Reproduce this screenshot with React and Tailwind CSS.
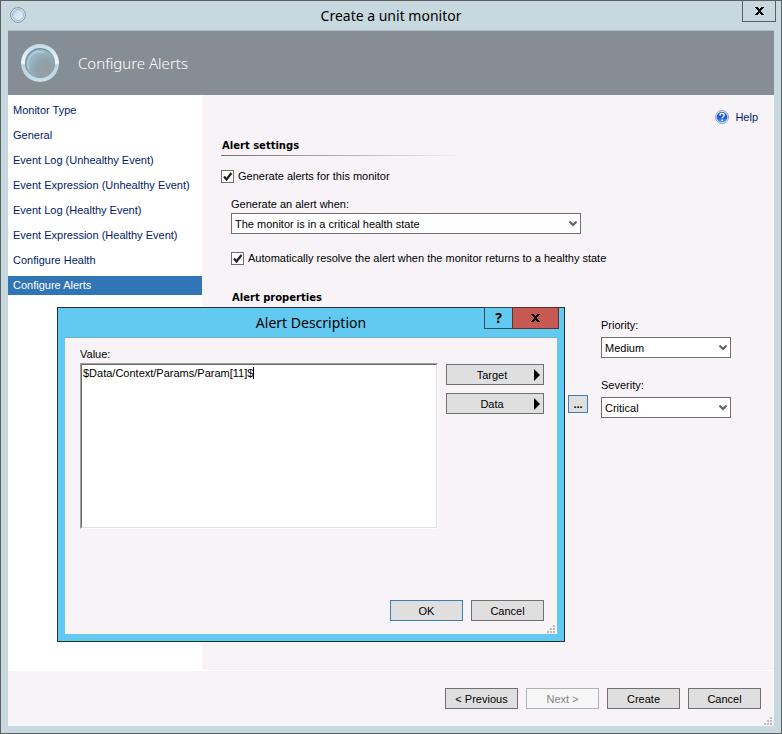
import { useState } from "react";

const steps = [
  "Monitor Type",
  "General",
  "Event Log (Unhealthy Event)",
  "Event Expression (Unhealthy Event)",
  "Event Log (Healthy Event)",
  "Event Expression (Healthy Event)",
  "Configure Health",
  "Configure Alerts",
];

const OrbIcon = ({ className }) => (
  <svg viewBox="0 0 40 40" className={className} aria-hidden="true">
    <defs>
      <linearGradient id="orb-ring" x1="0" y1="0" x2="0" y2="1">
        <stop offset="0" stopColor="#c3dbe7" />
        <stop offset="0.5" stopColor="#f1f7fb" />
        <stop offset="0.55" stopColor="#b9d2df" />
        <stop offset="1" stopColor="#c9dfe9" />
      </linearGradient>
      <radialGradient id="orb-glass" cx="0.68" cy="0.7" r="0.7">
        <stop offset="0" stopColor="#9a9a9f" />
        <stop offset="0.5" stopColor="#8fa3ad" />
        <stop offset="1" stopColor="#9dbccb" />
      </radialGradient>
    </defs>
    <circle cx="20" cy="20" r="19" fill="url(#orb-ring)" />
    <circle cx="20" cy="20" r="15" fill="#6f93a5" />
    <circle cx="20.5" cy="20.8" r="14.2" fill="url(#orb-glass)" />
    <path d="M9 26a12 12 0 0 1 15-16.500" fill="none" stroke="#b5cfdb" strokeWidth="1.200" />
  </svg>
);

const SmallOrbIcon = () => (
  <svg viewBox="0 0 16 16" className="size-4" aria-hidden="true">
    <defs>
      <linearGradient id="small-orb" x1="0" y1="0" x2="1" y2="1">
        <stop offset="0" stopColor="#b5d2f5" />
        <stop offset="1" stopColor="#f2f8ff" />
      </linearGradient>
    </defs>
    <circle cx="8" cy="8" r="7.400" fill="#dfe8ec" stroke="#83939c" strokeWidth="1" />
    <circle cx="8" cy="8" r="5.500" fill="url(#small-orb)" stroke="#93a9bd" strokeWidth="0.800" />
  </svg>
);

const HelpIcon = () => (
  <svg viewBox="0 0 14 14" className="size-3.5" aria-hidden="true">
    <defs>
      <linearGradient id="help-ball" x1="0" y1="0" x2="0" y2="1">
        <stop offset="0" stopColor="#3a72d8" />
        <stop offset="0.5" stopColor="#1b4fcf" />
        <stop offset="1" stopColor="#4a9bff" />
      </linearGradient>
    </defs>
    <circle cx="7" cy="7" r="6.500" fill="#e4edf8" stroke="#8497b8" strokeWidth="0.900" />
    <circle cx="7" cy="7" r="5.300" fill="url(#help-ball)" />
    <path
      d="M5 5.400c0-2.600 4.200-2.600 4.200-.2 0 1.500-2.100 1.500-2.100 3.100"
      fill="none"
      stroke="#fff"
      strokeWidth="1.400"
    />
    <circle cx="7.100" cy="10.200" r="0.900" fill="#fff" />
  </svg>
);

const CloseIcon = () => (
  <svg viewBox="0 0 9 8" className="h-2 w-[9px]" aria-hidden="true">
    <path
      d="M0 0h3v1h1v1h1V1h1V0h3v1H8v1H7v1H6v2h1v1h1v1h1v1H6V7H5V6H4v1H3v1H0V7h1V6h1V5h1V3H2V2H1V1H0z"
      fill="#000"
      shapeRendering="crispEdges"
    />
  </svg>
);

const Grip = () => (
  <svg viewBox="0 0 9 9" className="absolute right-px bottom-px size-[9px]" aria-hidden="true">
    <path d="M6 1h2v2H6zM3 4h2v2H3zM6 4h2v2H6zM0 7h2v2H0zM3 7h2v2H3zM6 7h2v2H6z" fill="#bdbbbe" />
  </svg>
);

const Button = ({ children, primary, className = "h-[21px] w-[73px]", ...props }) => (
  <button
    type="button"
    className={`relative flex items-center justify-center border bg-[#dfdfdf] text-black disabled:border-[#adb2b5] disabled:bg-[#f6f6f6] disabled:text-[#838383] ${
      primary ? "border-[#3c7fb1]" : "border-[#707070]"
    } ${className}`}
    {...props}
  >
    {children}
  </button>
);

const MenuButton = ({ children }) => (
  <Button className="h-[21px] w-[98px] pr-1.5">
    {children}
    <svg viewBox="0 0 6 12" className="absolute top-1 right-[3px] h-3 w-1.5" aria-hidden="true">
      <path d="M0 0v12l6-6z" fill="#000" />
    </svg>
  </Button>
);

const Select = ({ id, options, className }) => (
  <div className={`relative ${className}`}>
    <select
      id={id}
      className="block h-[21px] w-full appearance-none border border-[#707070] bg-white pl-[3px] text-black"
    >
      {options.map((option) => (
        <option key={option}>{option}</option>
      ))}
    </select>
    <svg
      viewBox="0 0 8 6"
      className="pointer-events-none absolute top-2 right-1 h-1.5 w-2"
      aria-hidden="true"
    >
      <path d="M0.500 0.500 4 4l3.500-3.500" fill="none" stroke="#606060" strokeWidth="2" />
    </svg>
  </div>
);

const Checkbox = ({ label, className }) => {
  const [checked, setChecked] = useState(true);

  return (
    <label className={`flex items-center gap-1 ${className}`}>
      <span className="relative size-[13px] shrink-0">
        <input
          type="checkbox"
          checked={checked}
          onChange={() => setChecked(!checked)}
          className="block size-[13px] appearance-none border border-[#707070] bg-white"
        />
        {checked && (
          <svg
            viewBox="0 0 13 13"
            className="pointer-events-none absolute inset-0 size-[13px]"
            aria-hidden="true"
          >
            <path d="M3 6.500 5.500 9.500 10.500 3" fill="none" stroke="#212121" strokeWidth="2.200" />
          </svg>
        )}
      </span>
      {label}
    </label>
  );
};

const SectionTitle = ({ children, className }) => (
  <h3
    className={`h-[18px] pl-px font-['DejaVu_Sans',sans-serif] text-[10px] leading-[18px] font-bold ${className}`}
  >
    {children}
  </h3>
);

const AlertDescriptionDialog = () => {
  const [value, setValue] = useState("$Data/Context/Params/Param[11]$");

  return (
    <div
      role="dialog"
      aria-labelledby="dialog-title"
      className="absolute top-[306px] left-14 flex w-[508px] flex-col border border-[#1f3038] bg-[#62caf0] px-[7px] pb-[7px]"
    >
      <div className="relative flex h-[30px] items-center justify-center border-b border-[#6fb0cc]">
        <h2 id="dialog-title" className="font-['Noto_Sans',sans-serif] text-[14px]">
          Alert Description
        </h2>
        <div className="absolute -top-px -right-0.5 flex">
          <button
            type="button"
            aria-label="Help"
            className="flex h-[22px] w-[29px] items-center justify-center border border-[#2c4d5b] font-['Noto_Sans',sans-serif] text-[14px] font-bold"
          >
            ?
          </button>
          <button
            type="button"
            aria-label="Close"
            className="-ml-px flex h-[22px] w-[47px] items-center justify-center border border-[#5a2f2c] bg-[#c65a53]"
          >
            <CloseIcon />
          </button>
        </div>
      </div>

      <div className="relative flex h-[296px] flex-col justify-between bg-[#f7f3f7] px-[13px] pt-2 pb-[13px]">
        <div className="flex gap-2 pl-0.5">
          <div className="flex flex-1 flex-col">
            <label htmlFor="value" className="h-[17px] leading-4">
              Value:
            </label>
            <div className="relative border border-t-[#a0a0a0] border-r-white border-b-white border-l-[#a0a0a0]">
              <textarea
                id="value"
                value={value}
                onChange={(e) => setValue(e.target.value)}
                className="block h-[164px] w-full resize-none border border-t-[#696969] border-r-[#e3e0e3] border-b-[#e3e0e3] border-l-[#696969] bg-white px-px leading-4 outline-none"
              />
              <span className="absolute top-[3px] left-[172px] h-3 w-px bg-black" />
            </div>
          </div>
          <div className="flex flex-col gap-2 pt-[18px]">
            <MenuButton>Target</MenuButton>
            <MenuButton>Data</MenuButton>
          </div>
        </div>
        <div className="flex justify-end gap-2">
          <Button primary>OK</Button>
          <Button>Cancel</Button>
        </div>
        <Grip />
      </div>
    </div>
  );
};

const App = () => {
  return (
    <div className="relative flex min-h-screen flex-col border border-[#5c6062] bg-[#c7d8de] px-[7px] pb-[7px] font-['Liberation_Sans',sans-serif] text-[11px] leading-4 text-black">
      <header className="relative flex h-[30px] items-center justify-center border-b border-[#b0bfc6]">
        <div className="absolute top-1.5 left-0.5">
          <SmallOrbIcon />
        </div>
        <h1 className="font-['Noto_Sans',sans-serif] text-[14px]">Create a unit monitor</h1>
        <button
          type="button"
          aria-label="Close"
          className="absolute -top-px -right-0.5 flex h-[22px] w-[34px] items-center justify-center border border-[#5c6062]"
        >
          <CloseIcon />
        </button>
      </header>

      <div className="flex h-16 items-center gap-[18px] bg-[#868e95] pl-3">
        <OrbIcon className="size-10" />
        <h2 className="font-['Noto_Sans',sans-serif] text-[15px] font-light text-white">
          Configure Alerts
        </h2>
      </div>

      <div className="flex flex-1">
        <nav className="flex w-[194px] shrink-0 flex-col gap-1.5 bg-white pt-1.5">
          {steps.map((step) => (
            <a
              key={step}
              href="#"
              className={`h-[19px] pl-[5px] leading-[18px] whitespace-nowrap ${
                step === "Configure Alerts" ? "bg-[#3075b5] text-white" : "text-[#001b66]"
              }`}
            >
              {step}
            </a>
          ))}
        </nav>

        <main className="flex-1 border-b border-white bg-[#f7f3f7] pt-3.5 pr-4 pl-[19px]">
          <a href="#" className="flex items-center justify-end gap-1.5 text-[#001b66]">
            <HelpIcon />
            Help
          </a>

          <SectionTitle className="mt-3">Alert settings</SectionTitle>
          <div className="h-px w-[244px] bg-linear-to-r from-[#707070] to-[#f7f3f7]" />
          <Checkbox label="Generate alerts for this monitor" className="mt-3" />

          <div className="pl-2.5">
            <label htmlFor="state" className="mt-3 block h-[17px]">
              Generate an alert when:
            </label>
            <Select
              id="state"
              className="w-[350px]"
              options={["The monitor is in a critical health state"]}
            />
            <Checkbox
              label="Automatically resolve the alert when the monitor returns to a healthy state"
              className="mt-4"
            />

            <SectionTitle className="mt-[23px]">Alert properties</SectionTitle>
            <div className="mt-2.5 flex gap-[13px] pl-[337px]">
              <Button primary className="mt-[78px] h-[18px] w-5 font-bold">
                ...
              </Button>
              <div className="flex w-[130px] flex-col">
                <label htmlFor="priority" className="h-5">
                  Priority:
                </label>
                <Select id="priority" options={["Medium", "Low", "High"]} className="w-full" />
                <label htmlFor="severity" className="mt-[19px] h-5">
                  Severity:
                </label>
                <Select
                  id="severity"
                  options={["Critical", "Warning", "Information"]}
                  className="w-full"
                />
              </div>
            </div>
          </div>
        </main>
      </div>

      <footer className="relative flex h-[55px] items-start justify-end gap-2 bg-[#f7f3f7] pt-[17px] pr-[13px]">
        <Button>&lt; Previous</Button>
        <Button disabled>Next &gt;</Button>
        <Button>Create</Button>
        <Button>Cancel</Button>
        <Grip />
      </footer>

      <AlertDescriptionDialog />
    </div>
  );
};

export default App;
